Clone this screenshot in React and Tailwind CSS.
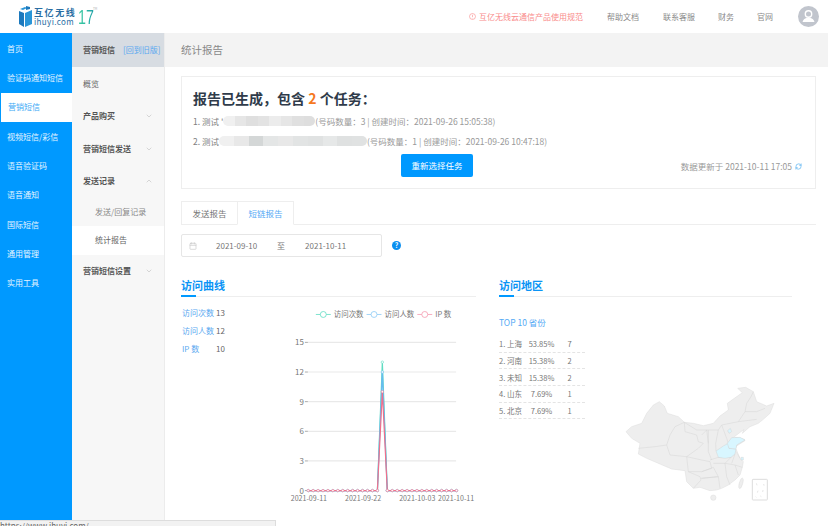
import React from "react";
import { ChevronDown, ChevronUp, RefreshCw, Calendar } from "lucide-react";

const F = { fontFamily: '"Noto Sans CJK SC", "Noto Sans", sans-serif' };

const nav = ["首页", "验证码通知短信", "营销短信", "视频短信/彩信", "语音验证码", "语音通知", "国际短信", "通用管理", "实用工具"];

function SideItem({ label, icon, h = "h-[32.5px]" }) {
  return (
    <div className={`${h} flex items-center justify-between pl-[11px] pr-[11px] font-bold text-[8px] text-[#555]`}>
      <span>{label}</span>
      {icon === "down" && <ChevronDown size={8} color="#c4c4c4" />}
      {icon === "up" && <ChevronUp size={8} color="#c4c4c4" />}
    </div>
  );
}

function Logo() {
  return (
    <div className="flex items-center pl-[19px] h-[33px]">
      <svg width="14" height="22" viewBox="0 0 14 22">
        <polygon points="0,5 5,7 5,21 0,18" fill="#1c79bd" />
        <polygon points="6,7 13,4 13,18 6,21" fill="#2a96d8" />
        <polygon points="1,3 6,1 8,2 4,4" fill="#2a96d8" />
        <polygon points="7,0 11,1 11,3 7,4" fill="#1c79bd" />
      </svg>
      <div className="ml-[1px] flex flex-col w-[43px]">
        <span className="text-[9px] leading-[11px] font-bold tracking-[1.6px] text-[#2a6ea3] whitespace-nowrap">互亿无线</span>
        <span className="text-[8px] leading-[8px] tracking-[0.4px] text-[#2a6ea3]">ihuyi.com</span>
      </div>
      <span
        className="ml-[1px] w-[24px] mr-[-9px] whitespace-nowrap text-[21px] leading-[20px] origin-left scale-x-[0.68] bg-gradient-to-r from-[#3ccf9f] to-[#1f9fa8] bg-clip-text text-transparent"
        style={{ fontFamily: '"Liberation Sans", sans-serif' }}
      >
        17
      </span>
      <span className="text-[3px] self-start mt-[7px] text-[#aaa]">TM</span>
    </div>
  );
}

function SectionTitle({ children }) {
  return (
    <div className="relative h-[19px] border-b border-[#eeeeee]">
      <span className="block text-[11px] leading-[14px] font-bold text-[#0a94f5]">{children}</span>
      <div className="absolute left-0 bottom-[-1px] w-[15px] h-[2px] bg-[#0099ff]" />
    </div>
  );
}

function Mask({ colors, w }) {
  return (
    <span className="inline-flex overflow-hidden rounded-full blur-[0.6px] h-[10px] align-middle" style={{ width: w }}>
      {colors.map((c, i) => (
        <span key={i} className="flex-1 h-full" style={{ background: c }} />
      ))}
    </span>
  );
}

function Chart() {
  const xs = Array.from({ length: 31 }, (_, i) => 308.3 + i * 4.97);
  const y0 = 492;
  const scale = 9.93;
  const series = [
    { v: 13, c: "#5fdcc2" },
    { v: 12, c: "#66baf2" },
    { v: 10, c: "#f0708c" },
  ];
  const ticks = [0, 3, 6, 9, 12, 15];
  return (
    <svg width="192" height="205" viewBox="285 305 192 205" style={F}>
      {[[316, "#5fdcc2", 334, "访问次数"], [367, "#8ccaf5", 385, "访问人数"], [418, "#f59ab0", 436, "IP 数"]].map(([x, c, tx, t]) => (
        <g key={t}>
          <line x1={x} x2={x + 15} y1="315" y2="315" stroke={c} strokeWidth="0.8" />
          <circle cx={x + 7.5} cy="315" r="3" fill="#fff" stroke={c} strokeWidth="0.8" />
          <text x={tx} y="318" fontSize="7.5" fill="#777">{t}</text>
        </g>
      ))}
      {ticks.map((t) => {
        const y = y0 - t * scale * 1;
        return (
          <g key={t}>
            {t > 0 && <line x1="308" x2="457" y1={y} y2={y} stroke="#e9e9e9" strokeWidth="1.2" />}
            <line x1="305" x2="308" y1={y} y2={y} stroke="#888" strokeWidth="0.7" />
            <text x="304" y={y + 3} fontSize="8" textAnchor="end" fill="#777">{t}</text>
          </g>
        );
      })}
      {[[309, "2021-09-11"], [363.5, "2021-09-22"], [418, "2021-10-03"], [457, "2021-10-11"]].map(([x, t]) => (
        <text key={t} x={x} y="503" fontSize="7.1" textAnchor="middle" fill="#777">{t}</text>
      ))}
      {series.map((s) => (
        <g key={s.v}>
          <polyline
            fill="none"
            stroke={s.c}
            strokeWidth="1.2"
            points={xs.map((x, i) => `${x},${i === 15 ? y0 - s.v * scale : y0}`).join(" ")}
          />
          {xs.map((x, i) => (
            <circle key={i} cx={x} cy={i === 15 ? y0 - s.v * scale : y0} r="1.2" fill="#fff" stroke={s.c} strokeWidth="0.6" />
          ))}
        </g>
      ))}
    </svg>
  );
}

function ChinaMap() {
  const outline = "3,155 20,140 50,130 65,100 85,75 103,65 118,78 127,100 160,110 178,127 205,130 235,137 265,130 285,108 310,90 307,70 328,55 352,38 338,25 362,22 385,35 395,65 425,78 447,70 435,100 415,118 400,130 375,140 352,160 357,148 335,165 318,178 335,172 358,178 360,182 335,198 330,208 345,235 355,245 352,262 345,285 330,300 310,315 290,325 275,330 255,332 225,322 205,325 185,305 180,272 140,267 105,252 65,235 40,222 45,190 20,175";
  const lines = [
    "40,205 90,200 125,195",
    "125,195 135,165 150,140 178,127",
    "125,195 135,225 185,230 190,275",
    "178,127 180,155 215,165 220,185 235,190 220,205 185,230",
    "178,127 215,150 245,150 280,150 290,135 340,125 360,95 365,70",
    "385,35 378,50 365,70",
    "360,95 395,95 420,85",
    "340,125 380,120 395,118",
    "280,150 272,190 273,213",
    "290,135 305,175 310,190",
    "230,165 245,150 250,190",
    "250,150 250,215 260,240",
    "185,230 230,240 255,245 260,265 230,275 190,275",
    "190,275 225,290 228,300 205,325",
    "230,275 265,262 280,290 230,295",
    "228,295 280,290 285,325",
    "265,250 300,250 305,290 315,315",
    "300,250 330,255 340,285",
    "330,255 352,262",
    "255,240 280,232 318,232 300,250",
    "330,222 320,250",
    "333,207 345,235",
  ];
  const hi = [
    "273,213 295,198 310,190 312,205 333,207 330,222 318,232 300,235 280,232",
    "307,190 320,173 345,172 360,180 335,195 333,207 312,205",
    "308,152 316,145 320,155 312,160",
    "348,232 355,232 355,240 348,240",
  ];
  return (
    <svg width="160" height="125" viewBox="0 0 480 375">
      <polygon points={outline} fill="#eeeeee" stroke="#dddddd" strokeWidth="1.5" strokeLinejoin="round" />
      {lines.map((l) => (
        <polyline key={l} points={l} fill="none" stroke="#d4d4d4" strokeWidth="1.4" />
      ))}
      {hi.map((p) => (
        <polygon key={p} points={p} fill="#d8f6ff" stroke="#d0d0d0" strokeWidth="1.3" />
      ))}
      <ellipse cx="265" cy="353" rx="8" ry="8" fill="#eeeeee" stroke="#dddddd" strokeWidth="1.5" />
      <ellipse cx="348" cy="310" rx="5" ry="16" fill="#eeeeee" stroke="#dddddd" strokeWidth="1.5" transform="rotate(15 348 310)" />
      <rect x="382" y="298" width="45" height="62" rx="2" fill="#fff" stroke="#dddddd" strokeWidth="3" />
      <path d="M394 310 l2 6 M416 312 l1 5 M399 332 l-2 6 M414 330 l-1 6 M406 348 l3 2 M392 350 l2 2" stroke="#cccccc" strokeWidth="1.5" fill="none" />
    </svg>
  );
}

const rows = [
  ["1. 上海", "53.85%", "7"],
  ["2. 河南", "15.38%", "2"],
  ["3. 未知", "15.38%", "2"],
  ["4. 山东", "7.69%", "1"],
  ["5. 北京", "7.69%", "1"],
];

export default function App() {
  return (
    <div className="relative w-[828px] h-[526px] overflow-hidden bg-white" style={F}>
      <header className="h-[33px] flex items-center justify-between bg-white">
        <Logo />
        <div className="flex items-center text-[8px] text-[#8a8a8a]">
          <span className="flex items-center text-[8px] text-[#f98a8a] mr-[24px]">
            <svg width="7" height="7" viewBox="0 0 8 8" className="mr-[3px]">
              <circle cx="4" cy="4" r="3.4" fill="none" stroke="#f98a8a" strokeWidth="0.7" />
              <line x1="4" x2="4" y1="2" y2="4.6" stroke="#f98a8a" strokeWidth="0.7" />
              <circle cx="4" cy="5.8" r="0.45" fill="#f98a8a" />
            </svg>
            互亿无线云通信产品使用规范
          </span>
          <span className="mr-[24px]">帮助文档</span>
          <span className="mr-[23px]">联系客服</span>
          <span className="mr-[23px]">财务</span>
          <span className="mr-[25px]">官网</span>
          <svg width="21" height="21" viewBox="0 0 21 21" className="mr-[9px]">
            <circle cx="10.5" cy="10.5" r="10.5" fill="#c1c5cd" />
            <circle cx="10.5" cy="8" r="3.2" fill="none" stroke="#fff" strokeWidth="1.4" />
            <path d="M4.5 16 q1 -3.5 4 -4 h4 q3 .5 4 4 z" fill="#fff" />
          </svg>
        </div>
      </header>

      <div className="flex h-[487px]">
        <nav className="w-[72px] shrink-0 bg-[#0099ff] pt-[1px]">
          {nav.map((n, i) => (
            <div
              key={n}
              className={`h-[29.35px] flex items-center pl-[7px] text-[8px] whitespace-nowrap ${
                i === 2 ? "ml-[1px] pl-[6px] bg-white text-[#3da9f5]" : "text-[#e6f5ff]"
              }`}
            >
              {n}
            </div>
          ))}
        </nav>

        <aside className="w-[93px] shrink-0 bg-[#f7f7f7] border-r border-[#ececec]">
          <div className="h-[34px] bg-[#d7dce2] flex items-center pl-[11px] text-[8px] whitespace-nowrap">
            <span className="font-bold text-[#555]">营销短信</span>
            <span className="ml-[8px] text-[#5aa8f0]">[回到旧版]</span>
          </div>
          <div className="h-[33px] flex items-center pl-[11px] text-[8px] text-[#666]">概览</div>
          <SideItem label="产品购买" icon="down" />
          <SideItem label="营销短信发送" icon="down" />
          <SideItem label="发送记录" icon="up" />
          <div className="h-[28px] flex items-center pl-[23px] text-[8px] text-[#888]">发送/回复记录</div>
          <div className="h-[29px] flex items-center pl-[23px] text-[8px] text-[#666] bg-white">统计报告</div>
          <SideItem label="营销短信设置" icon="down" />
        </aside>

        <main className="flex-1 min-w-0">
          <div className="h-[34px] bg-[#f3f3f3] flex items-center pl-[16px] text-[10.5px] text-[#888]">统计报告</div>
          <div className="pl-[16px] pr-[12px] pt-[9px]">
            <section className="h-[113px] border border-[#eeeeee] pt-[11px] pl-[11px] pr-[13px]">
              <h1 className="text-[14px] leading-[20px] font-bold text-[#2f3b4a] whitespace-nowrap">
                报告已生成，包含 <span className="text-[#f5781f]">2</span> 个任务：
              </h1>
              <div className="mt-[3px] h-[20px] flex items-center text-[8.5px] text-[#808080] whitespace-nowrap">
                <span>1. 测试 '</span>
                <Mask w={92} colors={["#f0f0f0", "#e6e6e6", "#dfdfdf", "#e3e3e3", "#ececec", "#e6e6e6", "#e0e0e0", "#dedede"]} />
                <span className="text-[#999]">(号码数量：3 | 创建时间：2021-09-26 15:05:38)</span>
              </div>
              <div className="h-[20px] flex items-center text-[8.5px] text-[#808080] whitespace-nowrap">
                <span>2. 测试</span>
                <Mask w={148} colors={["#f0f0f0", "#e8e8e8", "#d4d7d7", "#e4e6e6", "#e8e8e8", "#e2e4e4", "#e0e2e2", "#e6e8e8", "#dfe1e1", "#e0e2e2"]} />
                <span className="text-[#999]">(号码数量：1 | 创建时间：2021-09-26 10:47:18)</span>
              </div>
              <div className="mt-[3px] flex items-center">
                <button className="ml-[208px] w-[72px] h-[23px] rounded-[2px] bg-[#0099ff] text-white text-[8.5px]">重新选择任务</button>
                <span className="ml-auto flex items-center text-[8.5px] text-[#999] whitespace-nowrap mt-[1px]">
                  数据更新于 2021-10-11 17:05
                  <RefreshCw size={7} color="#3da5f0" className="ml-[3px]" />
                </span>
              </div>
            </section>

            <div className="mt-[12px] flex h-[24px] border-b border-[#eeeeee] text-[8.5px]">
              <div className="w-[56px] h-[24px] border border-[#eeeeee] border-r-0 flex items-center justify-center text-[#777]">发送报告</div>
              <div className="w-[57px] h-[24px] border border-[#eeeeee] border-b-white flex items-center justify-center text-[#55aaf5]">短链报告</div>
            </div>

            <div className="mt-[9px] flex items-center">
              <div className="w-[201px] h-[23px] border border-[#e6e6e6] rounded-[2px] flex items-center text-[8px] text-[#777] pl-[7px]">
                <Calendar size={8} color="#c9c9c9" />
                <span className="ml-[19px]">2021-09-10</span>
                <span className="ml-[20px]">至</span>
                <span className="ml-[20px]">2021-10-11</span>
              </div>
              <span className="ml-[10px] w-[9px] h-[9px] rounded-full bg-[#0a8ff0] flex items-center justify-center text-white text-[7px] font-bold leading-none">?</span>
            </div>

            <div className="mt-[21px] flex">
              <div className="w-[295px] shrink-0">
                <SectionTitle>访问曲线</SectionTitle>
                <div className="flex mt-[7px]">
                  <div className="w-[104px] shrink-0 text-[8px]">
                    {[["访问次数", "13"], ["访问人数", "12"], ["IP 数", "10"]].map(([a, b]) => (
                      <div key={a} className="h-[18px] flex items-center">
                        <span className="w-[35px] pl-[1px] text-[#5aa8f0]">{a}</span>
                        <span className="text-[#666]">{b}</span>
                      </div>
                    ))}
                  </div>
                  <Chart />
                </div>
              </div>
              <div className="w-[293px] ml-[23px] shrink-0">
                <SectionTitle>访问地区</SectionTitle>
                <div className="flex">
                  <div className="w-[86px] shrink-0">
                    <div className="mt-[18px] text-[8.5px] leading-[14px] text-[#55aaf5]">TOP 10 省份</div>
                    <div className="mt-[7px] text-[7.5px] text-[#777]">
                      {rows.map(([a, b, c]) => (
                        <div key={a} className="h-[16.67px] grid grid-cols-[27px_31px_28px] items-center border-b border-dashed border-[#e4e4e4] whitespace-nowrap">
                          <span>{a}</span>
                          <span className="text-center">{b}</span>
                          <span className="text-center pr-[3px]">{c}</span>
                        </div>
                      ))}
                    </div>
                  </div>
                  <div className="ml-[40px] mt-[83px]">
                    <ChinaMap />
                  </div>
                </div>
              </div>
            </div>
          </div>
        </main>
      </div>

      <div className="absolute left-0 bottom-0 w-[276px] h-[6px] overflow-hidden bg-[#f2f2f2] border-t border-r border-[#dddddd] text-[8px] leading-[9px] text-[#666]">
        https://www.ihuyi.com/
      </div>
    </div>
  );
}
